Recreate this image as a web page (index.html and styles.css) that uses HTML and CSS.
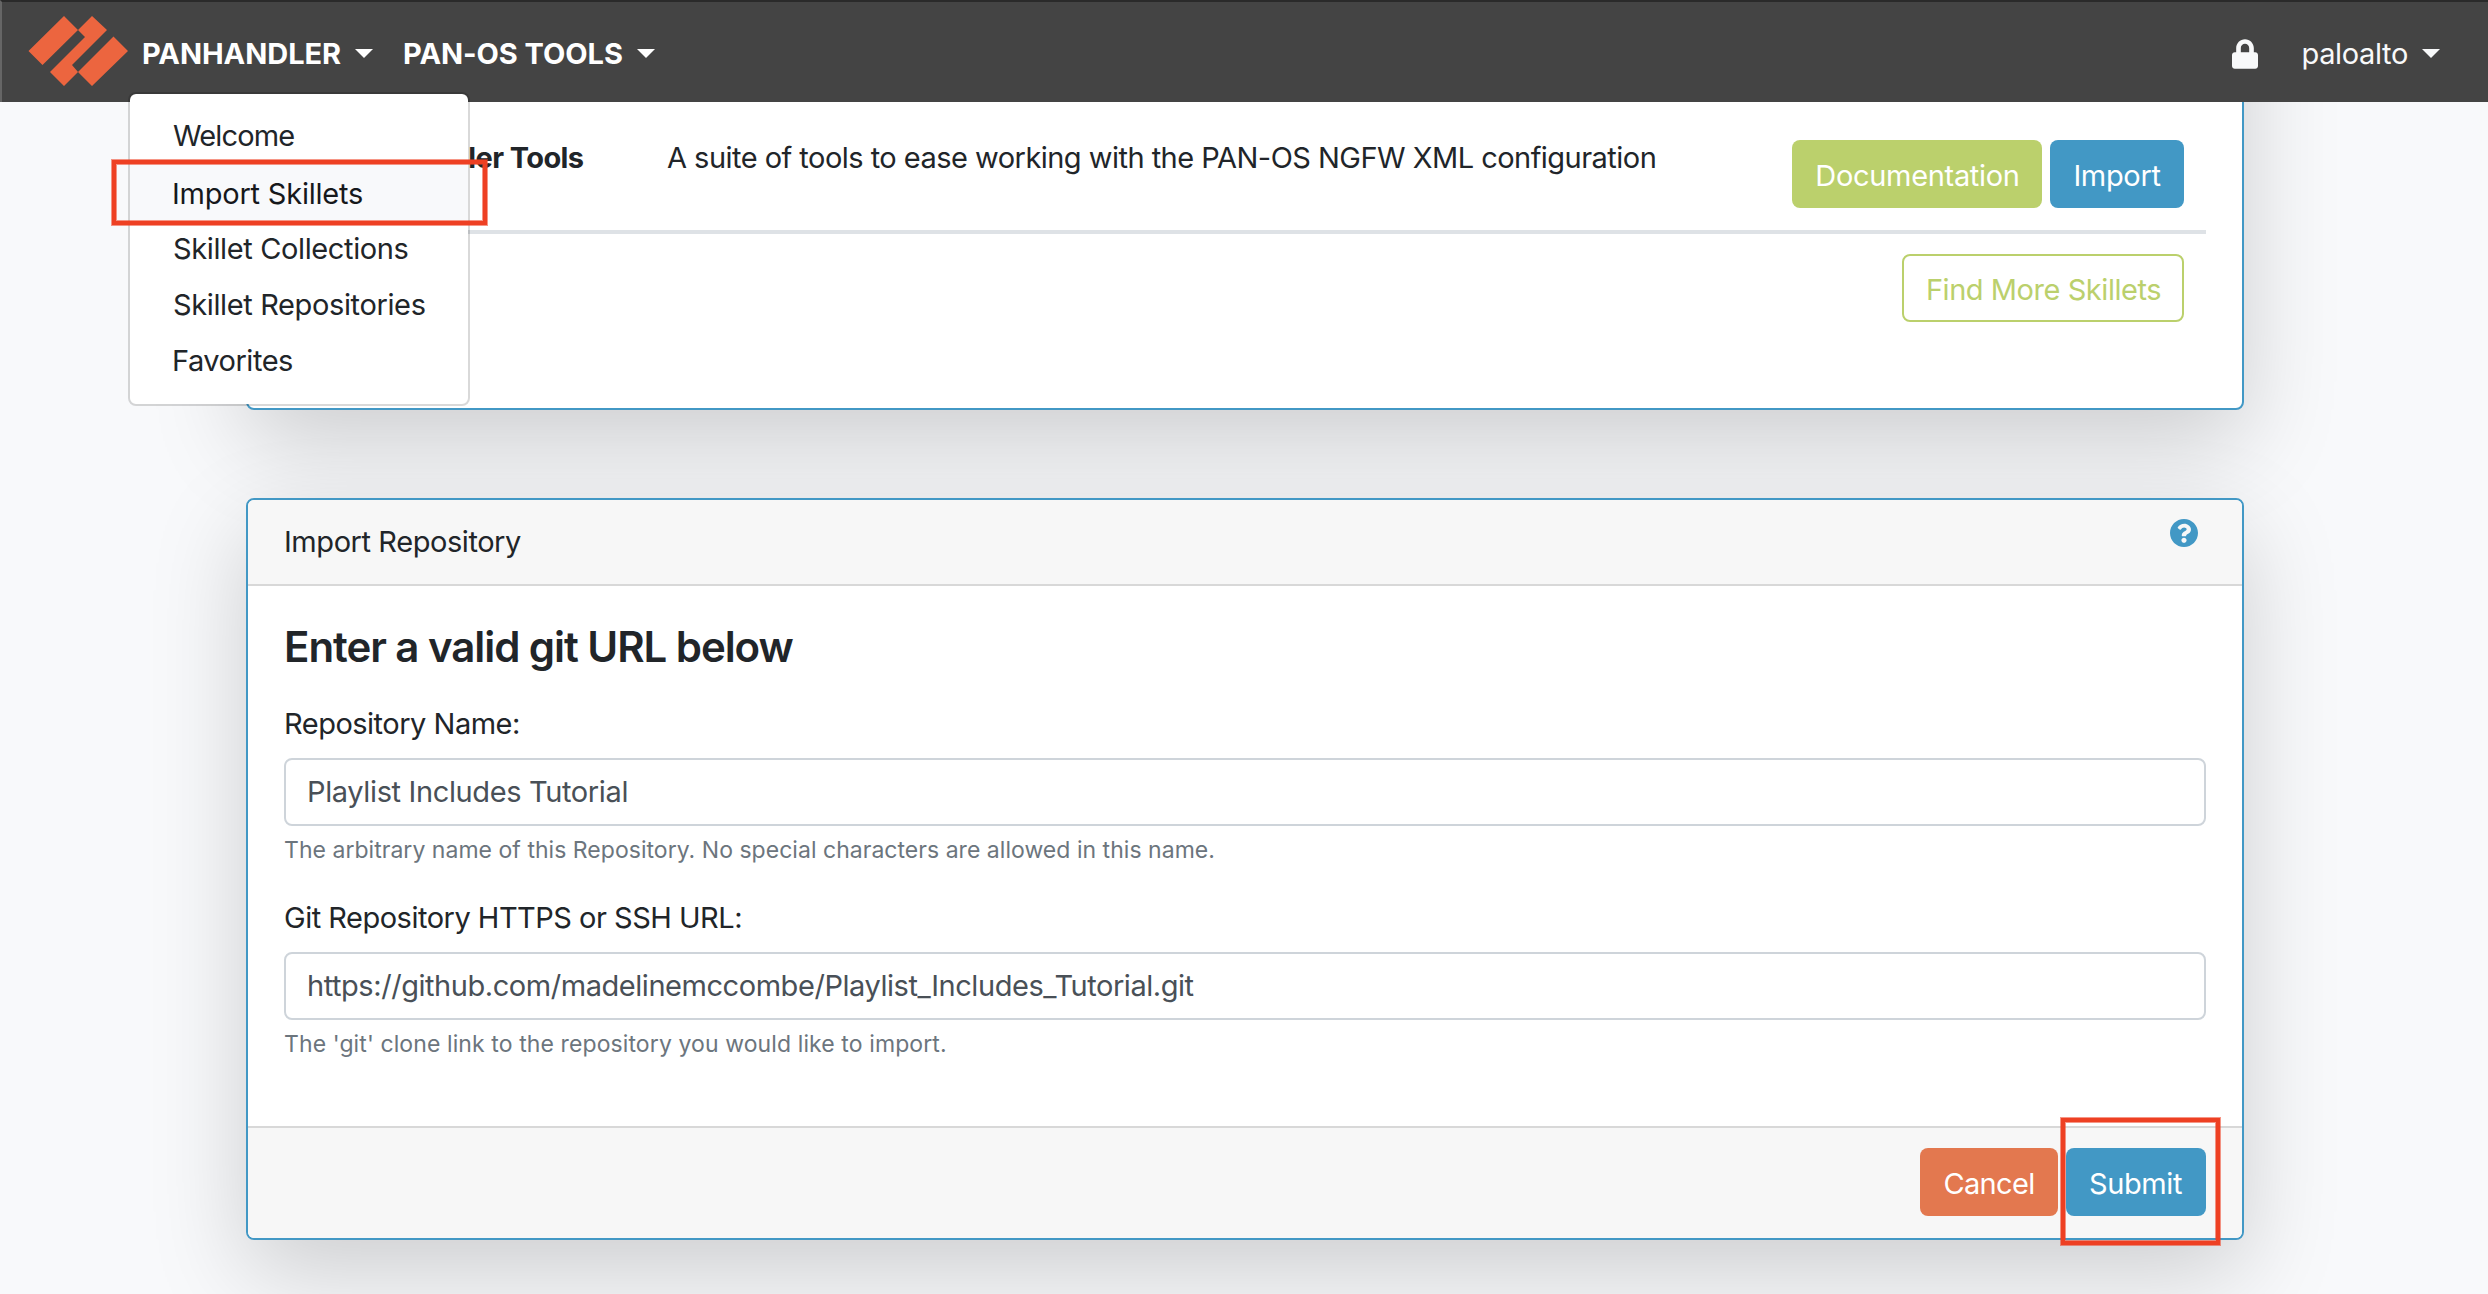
FILE: index.html
```
<!DOCTYPE html>
<html lang="en">
<head>
<meta charset="utf-8">
<title>Panhandler - Import Skillets</title>
<link rel="stylesheet" href="styles.css">
</head>
<body>
<nav class="navbar">
  <svg class="logo" viewBox="28 15 101 72" width="101" height="72" fill="#ec653f"><path d="M28.5 51 64 16 78 30 42.5 65zM78 30 92 16 107 30 72 65 78 72 64 86 50 72 85 37zM113.5 36.5 128 51 92 86 78 72z"/></svg>
  <div class="nav-item nav-panhandler">
    <a class="nav-link brand-link">PANHANDLER</a><i class="caret"></i>
    <div class="dropdown">
      <a class="item welcome">Welcome</a>
      <a class="item active">Import Skillets</a>
      <a class="item">Skillet Collections</a>
      <a class="item">Skillet Repositories</a>
      <a class="item favorites">Favorites</a>
      <span class="callout callout-menu"></span>
    </div>
  </div>
  <div class="nav-item nav-tools"><a class="nav-link brand-link">PAN-OS TOOLS</a><i class="caret"></i></div>
  <div class="nav-right">
    <svg class="lock" viewBox="0 0 448 512" width="26" height="30" fill="#f8f9fa"><path d="M400 224h-24v-72C376 68.200 307.800 0 224 0S72 68.200 72 152v72H48c-26.500 0-48 21.500-48 48v192c0 26.500 21.500 48 48 48h352c26.500 0 48-21.500 48-48V272c0-26.500-21.500-48-48-48zm-104 0H152v-72c0-39.700 32.300-72 72-72s72 32.300 72 72v72z"/></svg>
    <a class="nav-link user-link">paloalto</a><i class="caret caret-light"></i>
  </div>
</nav>
<main class="page">
  <section class="card skillets">
    <div class="skillet-row">
      <strong class="skillet-name">Panhandler Tools</strong>
      <p class="skillet-text">A suite of tools to ease working with the PAN-OS NGFW XML configuration</p>
      <div class="actions">
        <button class="btn green docs">Documentation</button>
        <button class="btn blue import">Import</button>
      </div>
    </div>
    <div class="more-row"><button class="btn outline find">Find More Skillets</button></div>
  </section>
  <section class="card repository">
    <header class="card-header">
      <span class="card-title">Import Repository</span>
      <svg class="help" viewBox="8 8 496 496" width="28" height="28" fill="#4298c5"><path d="M504 256c0 136.997-111.043 248-248 248S8 392.997 8 256C8 119.083 119.043 8 256 8s248 111.083 248 248zM262.655 90c-54.497 0-89.255 22.957-116.549 63.758-3.536 5.286-2.353 12.415 2.715 16.258l34.699 26.310c5.205 3.947 12.621 3.008 16.665-2.122 17.864-22.658 30.113-35.797 57.303-35.797 20.429 0 45.698 13.148 45.698 32.958 0 14.976-12.363 22.667-32.534 33.976C247.128 238.528 216 254.941 216 296v4c0 6.627 5.373 12 12 12h56c6.627 0 12-5.373 12-12v-1.333c0-28.462 83.186-29.647 83.186-106.667 0-58.002-60.165-102-116.531-102zM256 338c-25.365 0-46 20.635-46 46 0 25.364 20.635 46 46 46s46-20.636 46-46c0-25.365-20.635-46-46-46z"/></svg>
    </header>
    <form class="card-body">
      <h2 class="heading">Enter a valid git URL below</h2>
      <label class="label">Repository Name:</label>
      <div class="input name-input">Playlist Includes Tutorial</div>
      <small class="hint">The arbitrary name of this Repository. No special characters are allowed in this name.</small>
      <label class="label label-url">Git Repository HTTPS or SSH URL:</label>
      <div class="input">https://github.com/madelinemccombe/Playlist_Includes_Tutorial.git</div>
      <small class="hint hint-url">The 'git' clone link to the repository you would like to import.</small>
    </form>
    <footer class="card-footer">
      <button class="btn orange cancel">Cancel</button>
      <div class="submit-wrap"><button class="btn blue submit">Submit</button><span class="callout callout-submit"></span></div>
    </footer>
  </section>
</main>
</body>
</html>
```
FILE: styles.css
```
* { box-sizing: border-box; }
html, body { height: 100%; }
body {
  margin: 0;
  overflow: hidden;
  background: #f8f9fb;
  color: #212529;
  font: 400 29px/44px Inter, "Liberation Sans", sans-serif;
}

/* Navigation */
.navbar {
  position: relative;
  z-index: 10;
  display: flex;
  align-items: center;
  height: 102px;
  padding: 4px 48px 0 26px;
  background: #444;
  border-top: 2px solid #2a2a2a;
  border-left: 2px solid #666;
}
.logo { margin-top: -6px; }
.nav-item { position: relative; display: flex; align-items: center; }
.nav-panhandler { margin-left: 13px; }
.nav-tools { margin-left: 30px; }
.nav-link { color: #fff; white-space: nowrap; }
.brand-link { font-weight: 700; letter-spacing: -.05px; }
.user-link { margin-left: 43px; color: #f8f9fa; letter-spacing: -.35px; }
.caret {
  margin: -2px 0 0 14px;
  border: solid transparent;
  border-width: 9px 9px 0;
  border-top-color: #fff;
}
.caret-light { border-top-color: #f8f9fa; }
.nav-right { display: flex; align-items: center; margin-left: auto; }
.lock { margin-top: -1px; }

.dropdown {
  position: absolute;
  top: 60px;
  left: -14px;
  width: 342px;
  height: 314px;
  padding: 14px 0 16px;
  background: #fff;
  background-clip: padding-box;
  border: 2px solid rgba(0, 0, 0, .15);
  border-radius: 8px;
}
.item { display: block; height: 56px; padding-left: 43px; line-height: 58px; letter-spacing: -.37px; }
.item.welcome { line-height: 55px; letter-spacing: -.85px; }
.item.active { padding-left: 42px; background: #f8f9fb; color: #16181b; line-height: 60px; letter-spacing: -.22px; }
.item.favorites { padding-left: 42px; letter-spacing: -.48px; }

.callout {
  position: absolute;
  border: 4px solid #ee4023;
  outline: 1px solid rgba(238, 64, 35, .55);
  box-shadow: inset 0 0 0 1px rgba(238, 64, 35, .55);
}
.callout-menu { left: -18px; top: 66px; width: 375px; height: 65px; }

/* Cards */
.page { width: 1998px; margin-left: 246px; }
.card {
  background: #fff;
  border: 2px solid #4298c5;
  border-radius: 8px;
  box-shadow: 0 32px 96px rgba(0, 0, 0, .175);
}
.skillets { height: 508px; margin-top: -200px; padding: 198px 36px 0; }
.skillet-row {
  display: flex;
  height: 132px;
  border-bottom: 4px solid #dee2e6;
}
.skillet-name { width: 356px; padding: 34px 0 0 64px; white-space: nowrap; letter-spacing: -.6px; }
.skillet-text { margin: 34px 0 0 27px; white-space: nowrap; letter-spacing: -.53px; }
.actions { display: flex; gap: 8px; margin: 38px 22px 0 auto; }
.more-row { display: flex; justify-content: flex-end; padding: 20px 22px 0 0; }

.btn {
  height: 68px;
  padding: 3px 0 0;
  border: 0;
  border-radius: 8px;
  color: #fff;
  font: inherit;
  white-space: nowrap;
}
.green { background: #bbd06c; }
.blue { background: #4298c5; }
.orange { background: #e3784f; }
.outline { border: 2px solid #bbd06c; background: #fff; color: #bbd06c; }
.docs { width: 250px; padding-left: 1px; letter-spacing: -.32px; }
.import { width: 134px; letter-spacing: -.34px; }
.find { width: 282px; padding-left: 1px; letter-spacing: -.45px; }
.cancel { width: 138px; letter-spacing: -.65px; }
.submit { width: 140px; padding-right: 1px; letter-spacing: -.39px; }

.repository { height: 742px; margin-top: 88px; display: flex; flex-direction: column; }
.card-header {
  display: flex;
  justify-content: space-between;
  height: 86px;
  padding: 19px 44px 0 36px;
  background: #f7f7f7;
  border-bottom: 2px solid #d8d8d8;
  border-radius: 6px 6px 0 0;
}
.card-title { margin-top: 1px; letter-spacing: -.43px; }
.card-body { flex: 1; padding: 36px 36px 0; }
.heading { margin: 0; font-size: 42px; font-weight: 600; line-height: 50px; letter-spacing: -1.050px; }
.label { display: block; margin-top: 30px; letter-spacing: -.5px; }
.label-url { margin-top: 29px; }
.input {
  height: 68px;
  margin-top: 12px;
  padding-left: 21px;
  border: 2px solid #ced4da;
  border-radius: 8px;
  color: #495057;
  line-height: 64px;
  letter-spacing: -.45px;
}
.name-input { letter-spacing: -.37px; }
.hint { display: block; margin-top: 7px; color: #6c757d; font-size: 23px; line-height: 34px; letter-spacing: .03px; }
.hint-url { letter-spacing: .1px; }
.card-footer {
  display: flex;
  justify-content: flex-end;
  gap: 8px;
  height: 112px;
  padding: 20px 36px 0;
  background: #f7f7f7;
  border-top: 2px solid #d8d8d8;
  border-radius: 0 0 6px 6px;
}
.submit-wrap { position: relative; }
.callout-submit { left: -5px; top: -30px; width: 159px; height: 127px; }
```
